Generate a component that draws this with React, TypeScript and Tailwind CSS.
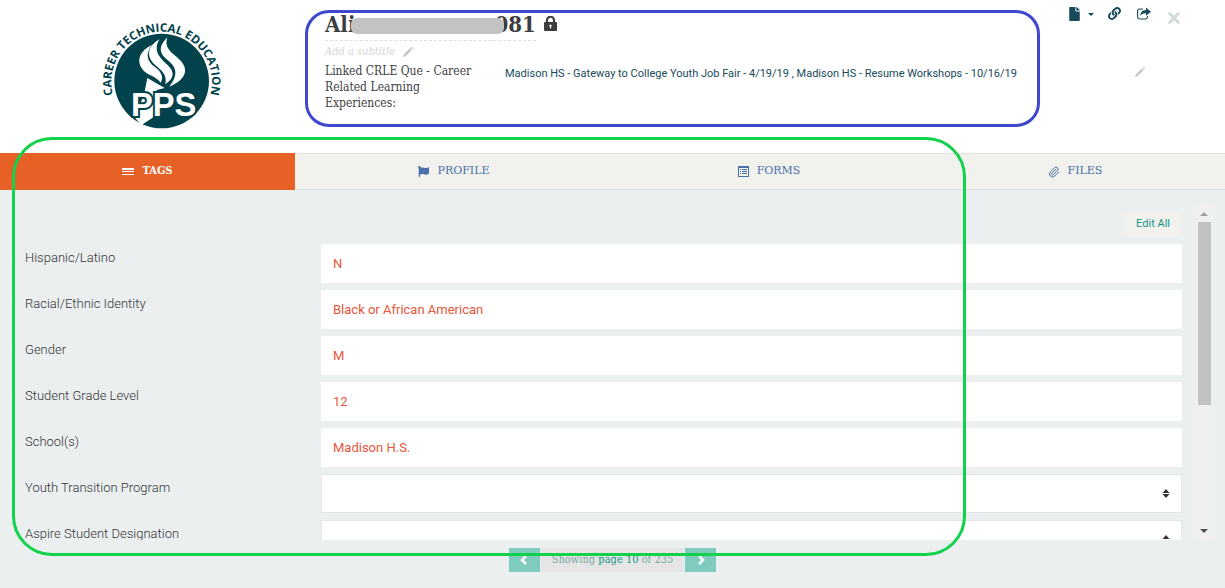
import type { ReactNode } from "react";
import { FaFile, FaFlag, FaLink } from "react-icons/fa";
import { Paperclip } from "lucide-react";

type Field = {
  id: string;
  label: string;
  value?: string;
};

const fields: Field[] = [
  { id: "hispanic", label: "Hispanic/Latino", value: "N" },
  { id: "race", label: "Racial/Ethnic Identity", value: "Black or African American" },
  { id: "gender", label: "Gender", value: "M" },
  { id: "grade", label: "Student Grade Level", value: "12" },
  { id: "school", label: "School(s)", value: "Madison H.S." },
  { id: "ytp", label: "Youth Transition Program" },
  { id: "aspire", label: "Aspire Student Designation" },
];

function Logo() {
  return (
    <svg viewBox="0 0 450 435" className="h-[145px] w-[150px]" role="img" aria-label="PPS Career Technical Education">
      <defs>
        <path id="logo-arc" d="M 74 300 A 151 151 0 1 1 356 300" />
      </defs>
      <circle cx="215" cy="243" r="142" fill="#02424c" />
      <text fill="#02424c" fontFamily="Open Sans, sans-serif" fontWeight="700" fontSize="35" textAnchor="middle">
        <textPath href="#logo-arc" startOffset="50%">
          CAREER TECHNICAL EDUCATION
        </textPath>
      </text>
      <g fill="#fff">
        <path d="M186 134C150 152 138 180 156 206C170 226 196 226 212 248C222 232 214 216 196 202C172 184 164 164 186 134Z" />
        <path d="M208 118C172 140 168 168 192 192C214 212 232 222 226 252C252 236 256 216 232 194C204 170 190 150 208 118Z" />
        <path d="M232 112C206 138 206 158 230 178C258 200 268 222 238 260C284 240 300 212 270 180C244 156 222 146 232 112Z" />
        <path d="M172 234L224 264L200 270L190 352L154 376L134 352L162 285Z" />
      </g>
      <text
        x="221"
        y="347"
        fill="#fff"
        stroke="#02424c"
        strokeWidth="12"
        paintOrder="stroke"
        fontFamily="Liberation Sans, sans-serif"
        fontWeight="700"
        fontSize="98"
        textAnchor="middle"
      >
        PPS
      </text>
    </svg>
  );
}

function LockIcon() {
  return (
    <svg viewBox="0 0 13 15" className="h-[15px] w-[13px]" aria-hidden="true">
      <path d="M3 7V4.2a3.5 3.5 0 0 1 7 0V7" fill="none" stroke="#3d3d3f" strokeWidth="2.2" />
      <rect y="6" width="13" height="9" rx="1" fill="#3d3d3f" />
      <path d="M6.5 8.6a1.2 1.2 0 0 1 .6 2.2v1.8H5.9v-1.8a1.2 1.2 0 0 1 .6-2.2Z" fill="#fff" />
    </svg>
  );
}

function PencilIcon() {
  return (
    <svg viewBox="0 0 10 10" className="size-[10px]" aria-hidden="true">
      <path d="M0 10l.7-2.6L6.9 1.2l1.9 1.9-6.2 6.2zM7.5.7 8.2 0h.8l1 1v.8l-.7.7z" fill="currentColor" />
    </svg>
  );
}

function ShareIcon() {
  return (
    <svg viewBox="0 0 14 13" className="h-[13px] w-[14px]" aria-hidden="true">
      <path d="M6 2H2.5A1.9 1.9 0 0 0 .6 3.9v6.2A1.9 1.9 0 0 0 2.5 12h6a1.9 1.9 0 0 0 1.9-1.9V9" fill="none" stroke="currentColor" strokeWidth="1.1" />
      <path d="M9 .6 14 4.7 9 8.8V6.3C6.3 6.2 4.4 7 3.2 9 3.3 5.800 5.200 3.300 9 3.100z" fill="currentColor" />
    </svg>
  );
}

function CloseIcon() {
  return (
    <svg viewBox="0 0 14 14" className="size-[14px]" aria-hidden="true">
      <path d="M1.800 1.800 12.200 12.200M12.200 1.800 1.800 12.200" fill="none" stroke="currentColor" strokeWidth="3" />
    </svg>
  );
}

function CaretIcon() {
  return (
    <svg viewBox="0 0 6 3" className="h-[3px] w-[6px]" aria-hidden="true">
      <path d="M0 0h6L3 3z" fill="currentColor" />
    </svg>
  );
}

function BarsIcon() {
  return (
    <svg viewBox="0 0 12 8" className="h-2 w-3" shapeRendering="crispEdges" aria-hidden="true">
      <path d="M0 0h12v2H0zM0 3h12v1H0zM0 6h12v1H0z" fill="currentColor" />
    </svg>
  );
}

function ListIcon() {
  return (
    <svg viewBox="0 0 11 11" className="size-[11px]" aria-hidden="true">
      <path d="M0 0h11v11H0zM1 2v8h9V2z" fill="currentColor" fillRule="evenodd" />
      <path d="M2 3h1v1H2zM4 3h5v1H4zM2 5h1v1H2zM4 5h5v1H4zM2 7h1v1H2zM4 7h5v1H4z" fill="currentColor" shapeRendering="crispEdges" />
    </svg>
  );
}

function ChevronIcon({ next }: { next?: boolean }) {
  return (
    <svg viewBox="0 0 8 10" className="h-[10px] w-2" aria-hidden="true">
      <path d={next ? "M2 1l4 4-4 4" : "M6 1L2 5l4 4"} fill="none" stroke="currentColor" strokeWidth="2.5" />
    </svg>
  );
}

function Tab({ icon, label, active }: { icon: ReactNode; label: string; active?: boolean }) {
  return (
    <a
      href="#"
      className={
        active
          ? "flex h-[37px] items-center justify-center gap-2 bg-[#e76127] font-['DejaVu_Serif_Condensed','DejaVu_Serif',serif] font-bold text-white"
          : "flex h-[37px] items-center justify-center gap-2 border-y border-[#e2e3e0] bg-[#f1f2ed] text-[#4a6fa9]"
      }
    >
      {icon}
      {label}
    </a>
  );
}

function FieldRow({ field }: { field: Field }) {
  return (
    <div className="flex shrink-0">
      <label htmlFor={field.id} className="w-[296px] shrink-0 pt-1 text-[13px] leading-5 font-light text-[#333]">
        {field.label}
      </label>
      {field.value ? (
        <input
          id={field.id}
          readOnly
          defaultValue={field.value}
          className="h-[39px] min-w-0 flex-1 bg-white px-3 text-[13px] text-[#e8563a] outline-none"
        />
      ) : (
        <div className="relative flex-1">
          <select id={field.id} className="h-[39px] w-full appearance-none border border-[#e3e6e6] bg-white px-3 text-[13px]">
            <option></option>
          </select>
          <svg viewBox="0 0 8 9" className="pointer-events-none absolute top-[15px] right-3 h-[9px] w-2" aria-hidden="true">
            <path d="M4 0l3.5 4h-7zM4 9L.5 5h7z" fill="#333" />
          </svg>
        </div>
      )}
    </div>
  );
}

function Header() {
  return (
    <header className="flex bg-white pb-[26px] font-['DejaVu_Serif_Condensed','DejaVu_Serif',serif]">
      <div className="-mb-[26px] w-[305px] shrink-0 pl-[90px]">
        <Logo />
      </div>
      <section className="mt-[10px] min-w-0 flex-1 rounded-[24px] border-3 border-[#3f48cc] pb-[13px] pl-[17px]">
        <div className="flex items-start gap-2">
          <h1 className="flex h-7 items-start border-b border-dashed border-[#ddd] text-[22px] leading-[22px] font-bold text-[#3d3d3f]">
            Ali
            {/* redacted part of the name */}
            <span className="z-10 mt-[5px] -mr-[10px] -ml-1 h-4 w-[153px] rounded-md bg-[#c3c3c3]" />
            081
          </h1>
          <span className="pt-[3px]">
            <LockIcon />
          </span>
        </div>
        <div className="flex h-[22px] items-center gap-2 text-[11px] text-[#d5d5d5] italic">
          Add a subtitle
          <button type="button" aria-label="Edit subtitle" className="text-[#c4c4c4]">
            <PencilIcon />
          </button>
        </div>
        <dl className="flex">
          <dt className="w-[180px] shrink-0 pr-7 text-xs leading-4 text-[#3d3d3f]">
            Linked CRLE Que - Career Related Learning Experiences:
          </dt>
          <dd className="pt-[3px] font-[Roboto,sans-serif] text-[11px] leading-4 text-[#174a5b]">
            Madison HS - Gateway to College Youth Job Fair - 4/19/19 , Madison HS - Resume Workshops - 10/16/19
          </dd>
        </dl>
      </section>
      <div className="flex w-[185px] shrink-0 flex-col items-start pt-[7px] pl-[29px] text-[#174a5b]">
        <div className="flex items-start">
          <button type="button" aria-label="Document" className="flex items-center gap-2">
            <FaFile className="h-[14px] w-[11px]" />
            <CaretIcon />
          </button>
          <button type="button" aria-label="Copy link" className="ml-[14px]">
            <FaLink className="size-[13px]" />
          </button>
          <button type="button" aria-label="Share" className="ml-4">
            <ShareIcon />
          </button>
          <button type="button" aria-label="Close" className="mt-1 ml-4 text-[#cfdbdc]">
            <CloseIcon />
          </button>
        </div>
        <button type="button" aria-label="Edit linked experiences" className="mt-[42px] ml-[66px] text-[#ccc8c8]">
          <PencilIcon />
        </button>
      </div>
    </header>
  );
}

function ScrollBar() {
  return (
    <div className="flex w-4 flex-col items-center bg-[#f0f0f0]" aria-hidden="true">
      <div className="flex h-[17px] items-center">
        <svg viewBox="0 0 8 4" className="h-1 w-2">
          <path d="M4 0l4 4H0z" fill="#a0a0a0" />
        </svg>
      </div>
      <div className="flex w-full flex-1 justify-center">
        <div className="h-[61%] w-[13px] bg-[#c1c1c1]" />
      </div>
      <div className="flex h-[18px] items-center">
        <svg viewBox="0 0 8 4" className="h-1 w-2">
          <path d="M4 4L0 0h8z" fill="#505050" />
        </svg>
      </div>
    </div>
  );
}

export default function App() {
  return (
    <div className="relative flex h-screen flex-col overflow-hidden bg-[#ebeff0] font-[Roboto,sans-serif]">
      <Header />

      <nav className="grid grid-cols-[295fr_318fr_312fr_300fr] font-['DejaVu_Serif',serif] text-[11px]">
        <Tab active label="TAGS" icon={<BarsIcon />} />
        <Tab label="PROFILE" icon={<FaFlag className="size-[11px]" />} />
        <Tab label="FORMS" icon={<ListIcon />} />
        <Tab label="FILES" icon={<Paperclip className="size-3" />} />
      </nav>

      <main className="mt-[15px] flex min-h-0 flex-1 gap-[14px] pr-[13px] pl-[25px]">
        <div className="flex min-w-0 flex-1 flex-col gap-[7px] overflow-hidden pt-[7px]">
          <button type="button" className="h-[25px] shrink-0 self-end bg-[#f1f2ed] px-3 text-[11px] text-[#169488]">
            Edit All
          </button>
          {fields.map((field) => (
            <FieldRow key={field.id} field={field} />
          ))}
        </div>
        <ScrollBar />
      </main>

      <footer className="flex justify-center gap-px pt-2 pb-4 font-['DejaVu_Serif_Condensed','DejaVu_Serif',serif] text-[11px]">
        <button type="button" aria-label="Previous page" className="flex h-6 w-[31px] items-center justify-center bg-[#80cbbf] text-white">
          <ChevronIcon />
        </button>
        <p className="h-6 bg-[#e4e5e4] px-[11px] leading-6 text-[#7ba9a2]">
          Showing <span className="text-[#169488]">page 10</span> of 235
        </p>
        <button type="button" aria-label="Next page" className="flex h-6 w-[31px] items-center justify-center bg-[#80cbbf] text-white">
          <ChevronIcon next />
        </button>
      </footer>

      {/* highlight frame over the tags panel */}
      <div className="pointer-events-none absolute top-[137px] right-[259px] bottom-8 left-3 rounded-[40px] border-3 border-[#12d14a]" />
    </div>
  );
}
